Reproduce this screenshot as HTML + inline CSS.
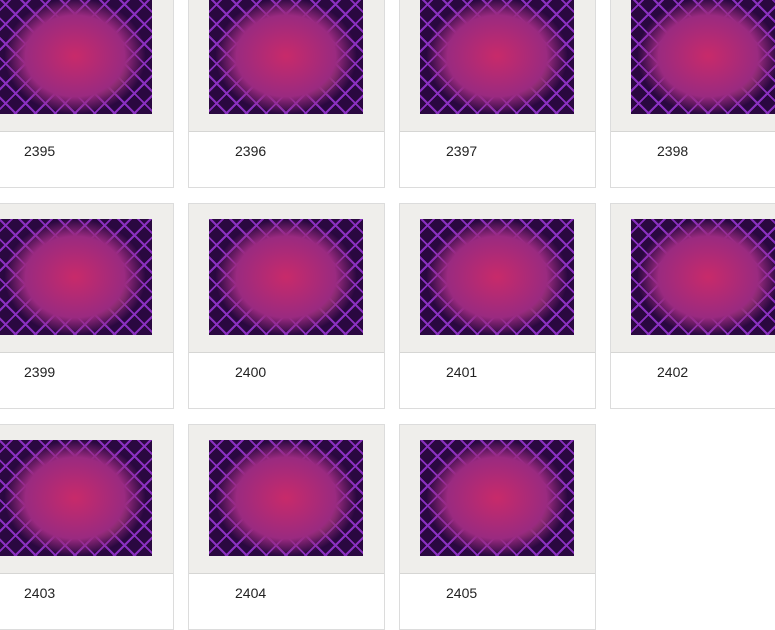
<!DOCTYPE html><html><head><style>
body{margin:0;width:775px;height:625px;overflow:hidden;background:#fff;position:relative;font-family:"Liberation Sans",sans-serif}
.c{position:absolute;width:197px;height:206px;border:1px solid #dcdcdc;background:#fff;box-sizing:border-box}
.f{position:absolute;left:0;top:0;width:100%;height:148px;background:#efeeeb;border-bottom:1px solid #d6d6d4}
.i{position:absolute;left:20px;top:15px;width:154px;height:116px;
background:radial-gradient(ellipse 46% 50% at 50% 50%,#c82a6a 0,#9a2a80 70%,transparent 100%),
radial-gradient(circle at 68% 62%,#8a8a20 0,transparent 22%),
repeating-linear-gradient(45deg,transparent 0 12px,#8a30c0 12px 14px),
repeating-linear-gradient(-45deg,transparent 0 12px,#8a30c0 12px 14px),
#2a0840}
.t{position:absolute;left:46px;top:160px;font-size:14px;color:#222}
</style></head><body>
<div class="c" style="left:-23px;top:-18px"><div class="f"><div class="i"></div></div><div class="t">2395</div></div>
<div class="c" style="left:188px;top:-18px"><div class="f"><div class="i"></div></div><div class="t">2396</div></div>
<div class="c" style="left:399px;top:-18px"><div class="f"><div class="i"></div></div><div class="t">2397</div></div>
<div class="c" style="left:610px;top:-18px"><div class="f"><div class="i"></div></div><div class="t">2398</div></div>
<div class="c" style="left:-23px;top:203px"><div class="f"><div class="i"></div></div><div class="t">2399</div></div>
<div class="c" style="left:188px;top:203px"><div class="f"><div class="i"></div></div><div class="t">2400</div></div>
<div class="c" style="left:399px;top:203px"><div class="f"><div class="i"></div></div><div class="t">2401</div></div>
<div class="c" style="left:610px;top:203px"><div class="f"><div class="i"></div></div><div class="t">2402</div></div>
<div class="c" style="left:-23px;top:424px"><div class="f"><div class="i"></div></div><div class="t">2403</div></div>
<div class="c" style="left:188px;top:424px"><div class="f"><div class="i"></div></div><div class="t">2404</div></div>
<div class="c" style="left:399px;top:424px"><div class="f"><div class="i"></div></div><div class="t">2405</div></div>
</body></html>
